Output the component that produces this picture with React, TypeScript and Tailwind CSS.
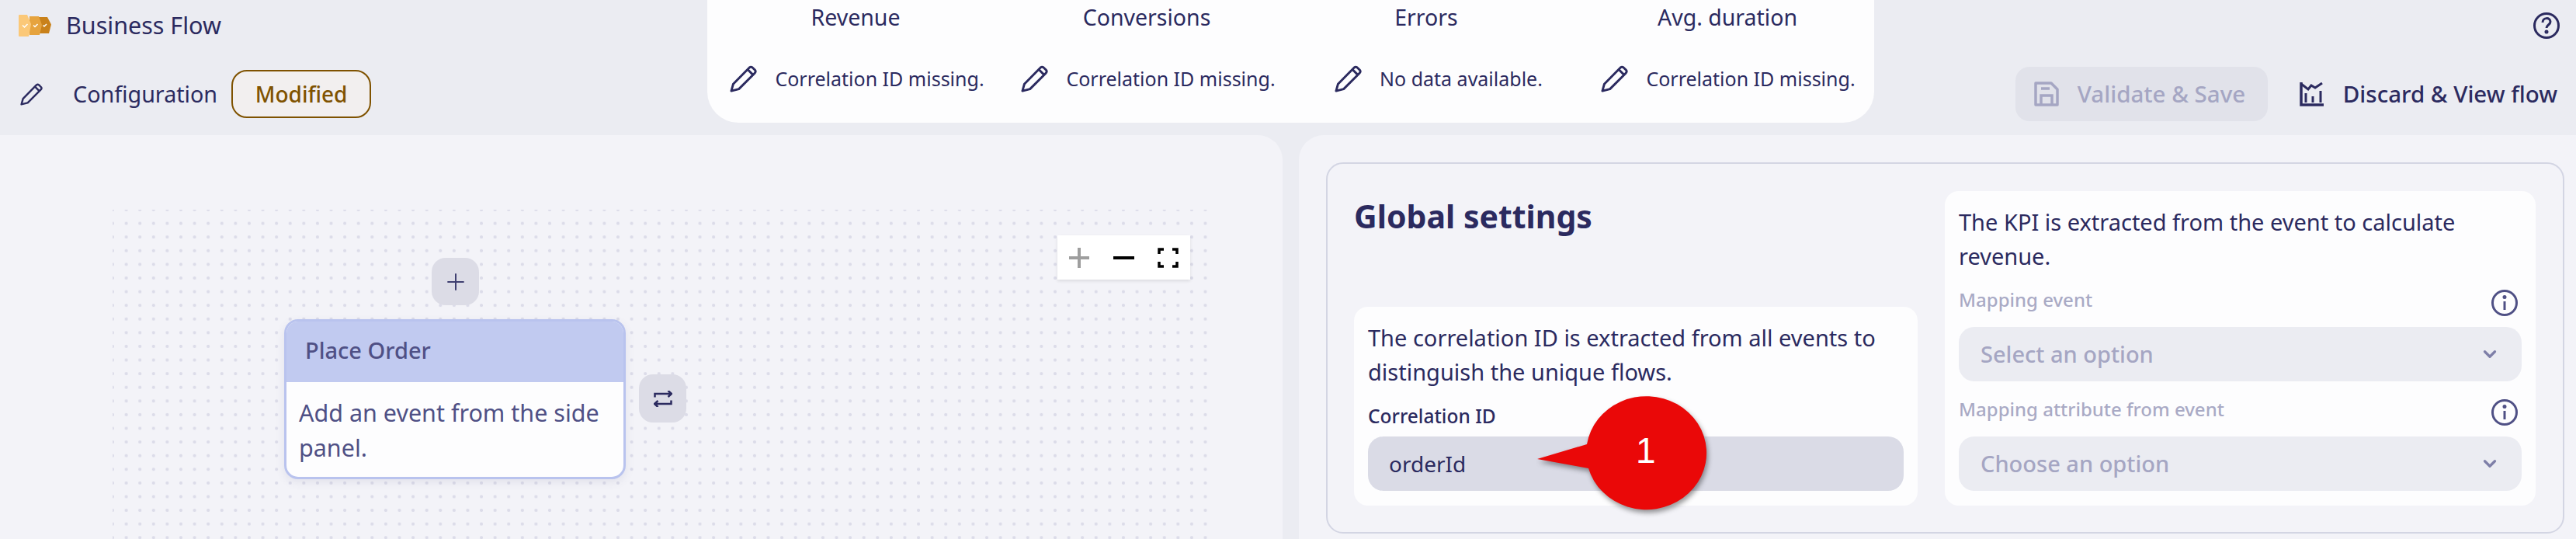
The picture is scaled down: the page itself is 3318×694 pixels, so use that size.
import { ChevronDown, Plus } from "lucide-react";

const PencilIcon = ({ className }: { className?: string }) => (
  <svg className={className} viewBox="0 0 36 36" fill="none" stroke="currentColor" strokeWidth={3} strokeLinejoin="round">
    <path d="M2 34 L4.500 25 L26 3 Q28 1.500 30 3 L33.500 6.500 Q35 8.500 33 10.500 L12 31.500 Z" />
    <path d="M24 6 L30.500 12.500" />
  </svg>
);

const InfoIcon = () => (
  <svg className="h-[36px] w-[36px] text-[#4f5085]" viewBox="0 0 36 36" fill="none" stroke="currentColor" strokeWidth={3}>
    <circle cx="18" cy="18" r="15.5" />
    <path d="M18 16v11" />
    <circle cx="18" cy="10.5" r="1" fill="currentColor" />
  </svg>
);

const Logo = () => (
  <svg className="h-[28px] w-[42px]" viewBox="0 0 42 28">
    <path d="M26 3H37L42 12.500L39 24H26Z" fill="#c9811a" />
    <path d="M14 2H26L30 13L27 26H14Z" fill="#e6a33e" />
    <path d="M0 1Q0 0 1 0H11L16 12L13 28H1Q0 28 0 27Z" fill="#fbc878" />
    <path d="M5 13.500l2.500 2.500 4-4M19 13.500l2 2 3.500-3.500M31.500 13.500l1.500 1.500 3-3" fill="none" stroke="#fff" strokeWidth="1.500" />
  </svg>
);

const kpis = [
  { title: "Revenue", status: "Correlation ID missing.", box: "w-[326px]", titleBox: "pr-[4px]" },
  { title: "Conversions", status: "Correlation ID missing.", box: "ml-[49px] w-[326px]", titleBox: "pr-[4px]" },
  { title: "Errors", status: "No data available.", box: "ml-[77px] w-[268px]", titleBox: "pr-[32px]" },
  { title: "Avg. duration", status: "Correlation ID missing.", box: "ml-[76px] w-[326px]", titleBox: "pr-[2px]" },
];

const selects = [
  { label: "Mapping event", placeholder: "Select an option" },
  { label: "Mapping attribute from event", placeholder: "Choose an option" },
];

export default function App() {
  return (
    <div className="flex h-[694px] w-[3318px] flex-col overflow-hidden bg-[#ebecf2] font-['Noto_Sans',sans-serif] text-[#2b2a5f]">
      {/* Header */}
      <header className="flex h-[174px] shrink-0 pl-[24px] pr-[20px]">
        <div className="flex w-[887px] flex-col">
          <div className="flex h-[66px] items-center gap-[19px]">
            <Logo />
            <span className="text-[30.500px]">Business Flow</span>
          </div>
          <div className="mt-[24px] flex items-center">
            <PencilIcon className="ml-[2px] h-[29px] w-[29px]" />
            <span className="ml-[39px] text-[28.700px]">Configuration</span>
            <span className="ml-[18px] flex h-[62px] w-[180px] items-center justify-center rounded-[20px] border-2 border-[#7f5200] bg-[#f2efef] text-[28px] font-medium text-[#7f5200]">
              Modified
            </span>
          </div>
        </div>

        <div className="flex h-[158px] w-[1503px] rounded-b-[40px] bg-[#fdfdfe] pl-[30px]">
          {kpis.map((kpi) => (
            <div key={kpi.title} className={`${kpi.box} flex flex-col items-center`}>
              <div className={`${kpi.titleBox} flex h-[44px] items-center text-[28.500px]`}>{kpi.title}</div>
              <div className="mt-[39px] flex items-center gap-[23px] whitespace-nowrap text-[25px]">
                <PencilIcon className="h-[35px] w-[35px] shrink-0" />
                <span>{kpi.status}</span>
              </div>
            </div>
          ))}
        </div>

        <div className="flex flex-1 flex-col items-end">
          <svg className="mt-[15px] h-[36px] w-[36px]" viewBox="0 0 36 36" fill="none" stroke="currentColor" strokeWidth={3}>
            <circle cx="18" cy="18" r="15.5" />
            <path d="M13 14c0-7 10-7 10-1 0 4-5 4-5 8" />
            <circle cx="18" cy="26" r="1" fill="currentColor" />
          </svg>
          <div className="mt-[35px] flex items-center pr-[4px]">
            <button className="flex h-[70px] w-[325px] items-center gap-[24px] rounded-[18px] bg-[#e1e2ea] pl-[24px] text-[29.500px] font-medium whitespace-nowrap text-[#a5a6c3]">
              <svg className="h-[32px] w-[32px] shrink-0" viewBox="0 0 32 32" fill="none" stroke="currentColor" strokeWidth={3.500}>
                <path d="M2 2h20l8 8v20H2z" strokeLinejoin="round" />
                <path d="M9 9h11" />
                <path d="M9 30V18h14v12" />
              </svg>
              Validate &amp; Save
            </button>
            <button className="ml-[41px] flex items-center gap-[25px] text-[29.500px] font-medium whitespace-nowrap">
              <svg className="h-[31px] w-[31px] shrink-0" viewBox="0 0 31 31" fill="none" stroke="currentColor" strokeWidth={3}>
                <path d="M2 0V29H31" strokeWidth={3.500} />
                <path d="M2 2L11 9L15 4L20 7L29 1" />
                <path d="M8 14V26M17 18V26M27 11V26" />
              </svg>
              Discard &amp; View flow
            </button>
          </div>
        </div>
      </header>

      <main className="flex min-h-0 flex-1 gap-[21px]">
        {/* Flow canvas */}
        <section className="w-[1652px] rounded-tr-[32px] bg-[#f3f3f8] pl-[145px] pt-[96px]">
          <div className="relative h-full w-[1411px] bg-[radial-gradient(circle,#dcdce9_1.800px,transparent_2.300px)] bg-[length:17.6px_17.6px] bg-[position:-8.800px_-8.800px]">
            <button className="absolute left-[411px] top-[62px] flex h-[61px] w-[61px] items-center justify-center rounded-[18px] bg-[#dcdce6] text-[#3f3f70]">
              <Plus size={34} strokeWidth={1.4} />
            </button>
            <div className="absolute left-[221px] top-[141px] w-[440px] overflow-hidden rounded-[18px] border-[3px] border-[#b9c3ee] bg-[#fdfdfe] shadow-[0_4px_12px_rgba(80,80,130,0.1)]">
              <div className="flex h-[78px] items-center bg-[#c1caf0] pb-[4px] pl-[24px] text-[29px] font-medium text-[#4f5085]">
                Place Order
              </div>
              <p className="h-[122px] px-[16px] pt-[17px] text-[30.500px] leading-[45px] text-[#4f5085]">
                Add an event from the side panel.
              </p>
            </div>
            <button className="absolute left-[678px] top-[212px] flex h-[62px] w-[61px] items-center justify-center rounded-[18px] bg-[#dcdce6]">
              <svg className="h-[21px] w-[24px] text-[#2b2a5f]" viewBox="0 0 24 21" fill="none" stroke="currentColor" strokeWidth={2.500}>
                <path d="M1.500 8.500V4H23M18.500 0L23 4L18.500 8M22.500 12.500V17H1M5.500 13L1 17L5.500 21" />
              </svg>
            </button>
            <div className="absolute left-[1217px] top-[33px] flex h-[57px] w-[171px] items-center justify-between bg-white px-[15px] shadow-[0_2px_4px_rgba(0,0,0,0.1)]">
              <svg className="h-[26px] w-[26px] text-[#9e9e9e]" viewBox="0 0 26 26" stroke="currentColor" strokeWidth={4}>
                <path d="M13 0v26M0 13h26" />
              </svg>
              <svg className="h-[26px] w-[27px] text-black" viewBox="0 0 27 26" stroke="currentColor" strokeWidth={4}>
                <path d="M0 13h27" />
              </svg>
              <svg className="h-[26px] w-[27px] text-black" viewBox="0 0 27 26" fill="none" stroke="currentColor" strokeWidth={3.500}>
                <path d="M2 8V2h6M19 2h6v6M25 18v6h-6M8 24H2v-6" />
              </svg>
            </div>
          </div>
        </section>

        {/* Settings */}
        <section className="flex-1 rounded-tl-[32px] bg-[#f3f3f8] pl-[35px] pt-[35px]">
          <div className="relative flex h-[478px] w-[1595px] gap-[35px] rounded-[22px] border-2 border-[#d3d5e3] pb-[34px] pl-[34px] pt-[35px]">
            <div className="flex w-[726px] flex-col justify-between">
              <h2 className="pt-[7px] text-[41px] leading-[50px] font-bold">Global settings</h2>
              <div className="h-[256px] rounded-[18px] bg-[#fdfdfe] px-[18px] pt-[18px]">
                <p className="text-[29px] leading-[43.500px]">
                  The correlation ID is extracted from all events to distinguish the unique flows.
                </p>
                <div className="mt-[20px] text-[24.500px] leading-[32px] font-medium">Correlation ID</div>
                <div className="mt-[10px] flex h-[70px] items-center rounded-[20px] bg-[#dadbe6] pl-[27px] text-[28px]">
                  orderId
                </div>
              </div>
            </div>

            <div className="h-[405px] w-[761px] rounded-[18px] bg-[#fdfdfe] px-[18px] pt-[18px]">
              <p className="text-[29px] leading-[43.500px]">The KPI is extracted from the event to calculate revenue.</p>
              {selects.map((select, index) => (
                <div key={select.label} className={index === 0 ? "mt-[21px]" : "mt-[22px]"}>
                  <div className="flex h-[36px] items-start justify-between pr-[4px]">
                    <span className="text-[24px] leading-[28px] font-medium text-[#a9aac5]">{select.label}</span>
                    <InfoIcon />
                  </div>
                  <div className="mt-[13px] flex h-[70px] items-center justify-between rounded-[20px] bg-[#ebecf2] pl-[28px] pr-[28px] text-[29px] font-medium text-[#a5a6c3]">
                    {select.placeholder}
                    <ChevronDown size={26} strokeWidth={3} className="text-[#7e7fa8]" />
                  </div>
                </div>
              ))}
            </div>

            {/* Callout annotation */}
            <div className="absolute left-[270px] top-[299px] h-[147px] w-[218px]">
              <svg className="h-full w-full overflow-visible drop-shadow-[2px_4px_3px_rgba(0,0,0,0.4)]" viewBox="0 0 218 147">
                <path d="M0 81 L64 62 A77.500 73 0 1 1 66 93 Z" fill="#ea0808" />
              </svg>
              <span className="absolute left-[127px] top-[43px] font-['Liberation_Sans',sans-serif] text-[46px] leading-[54px] text-white">
                1
              </span>
            </div>
          </div>
        </section>
      </main>
    </div>
  );
}
